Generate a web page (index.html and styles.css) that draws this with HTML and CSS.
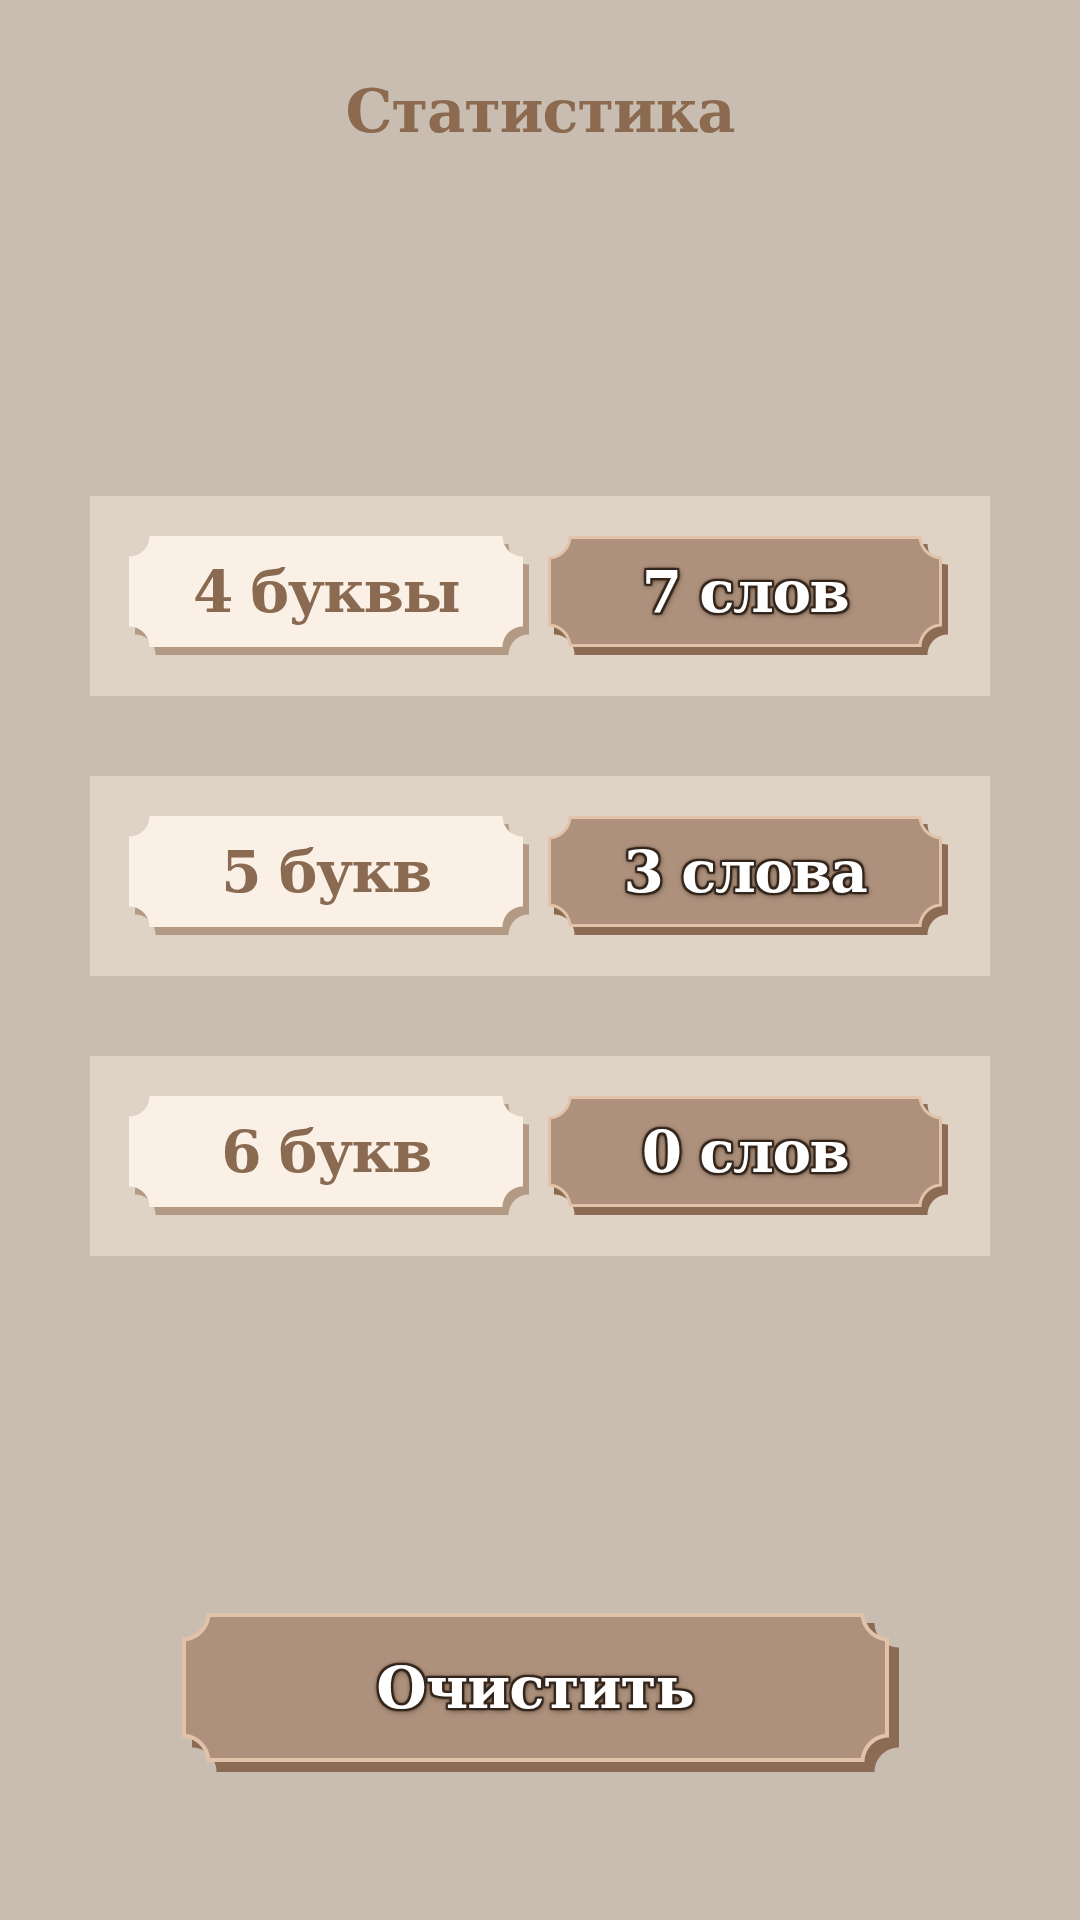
FILE: index.html
```html
<!DOCTYPE html>
<html lang="ru">
<head>
<meta charset="utf-8">
<title>Статистика</title>
<link rel="stylesheet" href="styles.css">
</head>
<body>
<div class="screen">
  <h1 class="title">Статистика</h1>
  <div class="stats">
    <div class="panel">
      <div class="tag tag-light"><div class="face notch"><span class="tag-text">4 буквы</span></div></div>
      <div class="tag tag-dark"><div class="face notch"><span class="tag-text">7 слов</span></div></div>
    </div>
    <div class="panel">
      <div class="tag tag-light"><div class="face notch"><span class="tag-text">5 букв</span></div></div>
      <div class="tag tag-dark"><div class="face notch"><span class="tag-text">3 слова</span></div></div>
    </div>
    <div class="panel">
      <div class="tag tag-light"><div class="face notch"><span class="tag-text">6 букв</span></div></div>
      <div class="tag tag-dark"><div class="face notch"><span class="tag-text">0 слов</span></div></div>
    </div>
  </div>
  <div class="action">
    <button class="tag tag-dark btn"><div class="face notch"><span class="tag-text">Очистить</span></div></button>
  </div>
</div>
</body>
</html>
```

FILE: styles.css
```css
html, body {
  margin: 0;
  padding: 0;
}
body {
  background: #c9bdb1;
  font-family: "DejaVu Serif", "Liberation Serif", serif;
  width: 1080px;
  height: 1920px;
  overflow: hidden;
}
.screen {
  display: flex;
  flex-direction: column;
  align-items: center;
}
.title {
  margin: 72px 0 0 0;
  height: 80px;
  line-height: 80px;
  font-size: 59px;
  font-weight: bold;
  color: #8b6a50;
  letter-spacing: -1px;
}
.stats {
  margin-top: 344px;
  display: flex;
  flex-direction: column;
  gap: 80px;
}
.panel {
  width: 900px;
  box-sizing: border-box;
  background: #dfd3c6;
  padding: 40px 48px 49px 39px;
  display: grid;
  grid-template-columns: 394px 394px;
  column-gap: 25px;
}

/* notched shape: four corner cut-outs intersected */
.notch,
.tag::before,
.tag-dark .face::before {
  --r: 20px;
  --o: 0px;
  -webkit-mask-image:
    radial-gradient(circle at calc(0% - var(--o)) calc(0% - var(--o)), #0000 calc(var(--r) + var(--o)), #000 calc(var(--r) + var(--o) + 1px)),
    radial-gradient(circle at calc(100% + var(--o)) calc(0% - var(--o)), #0000 calc(var(--r) + var(--o)), #000 calc(var(--r) + var(--o) + 1px)),
    radial-gradient(circle at calc(0% - var(--o)) calc(100% + var(--o)), #0000 calc(var(--r) + var(--o)), #000 calc(var(--r) + var(--o) + 1px)),
    radial-gradient(circle at calc(100% + var(--o)) calc(100% + var(--o)), #0000 calc(var(--r) + var(--o)), #000 calc(var(--r) + var(--o) + 1px));
  -webkit-mask-composite: source-in;
  mask-image:
    radial-gradient(circle at calc(0% - var(--o)) calc(0% - var(--o)), #0000 calc(var(--r) + var(--o)), #000 calc(var(--r) + var(--o) + 1px)),
    radial-gradient(circle at calc(100% + var(--o)) calc(0% - var(--o)), #0000 calc(var(--r) + var(--o)), #000 calc(var(--r) + var(--o) + 1px)),
    radial-gradient(circle at calc(0% - var(--o)) calc(100% + var(--o)), #0000 calc(var(--r) + var(--o)), #000 calc(var(--r) + var(--o) + 1px)),
    radial-gradient(circle at calc(100% + var(--o)) calc(100% + var(--o)), #0000 calc(var(--r) + var(--o)), #000 calc(var(--r) + var(--o) + 1px));
  mask-composite: intersect;
}

.tag {
  position: relative;
  height: 111px;
  isolation: isolate;
}
.tag::before {
  content: "";
  position: absolute;
  inset: 0;
  transform: translate(6px, 8px);
  z-index: 0;
}
.face {
  position: relative;
  z-index: 1;
  height: 100%;
  display: flex;
  align-items: center;
  justify-content: center;
}
.tag-text {
  position: relative;
  z-index: 2;
  font-size: 58px;
  font-weight: bold;
  line-height: 1;
  white-space: nowrap;
  letter-spacing: -1.5px;
}

.tag-light::before { background: #b39a85; }
.tag-light .face { background: #faf0e6; }
.tag-light .tag-text { color: #8a6a50; }

.tag-dark::before { background: #8b6b53; }
.tag-dark .face { background: #e2c3aa; }
.tag-dark .face::before {
  content: "";
  position: absolute;
  inset: 3px;
  background: #ad917c;
  --o: 3px;
}
.tag-dark .tag-text {
  color: #ffffff;
  text-shadow:
    2px 0 1px #35261c,
    -2px 0 1px #35261c,
    0 2px 1px #35261c,
    0 -2px 1px #35261c,
    2px 2px 1px #35261c,
    -2px -2px 1px #35261c,
    2px -2px 1px #35261c,
    -2px 2px 1px #35261c,
    0 0 5px rgba(45, 32, 24, 0.8),
    1px 2px 6px rgba(45, 32, 24, 0.6);
}

.action {
  margin-top: 357px;
  padding-right: 10px;
}
.btn {
  display: block;
  width: 707px;
  height: 149px;
  padding: 0;
  border: 0;
  background: none;
  font-family: inherit;
  cursor: pointer;
}
.btn::before {
  transform: translate(10px, 10px);
  --r: 24px;
}
.btn .face {
  --r: 24px;
}
.btn .face::before {
  inset: 4px;
  --r: 24px;
  --o: 4px;
}
.btn .tag-text {
  font-size: 58px;
  letter-spacing: -1px;
}
```
